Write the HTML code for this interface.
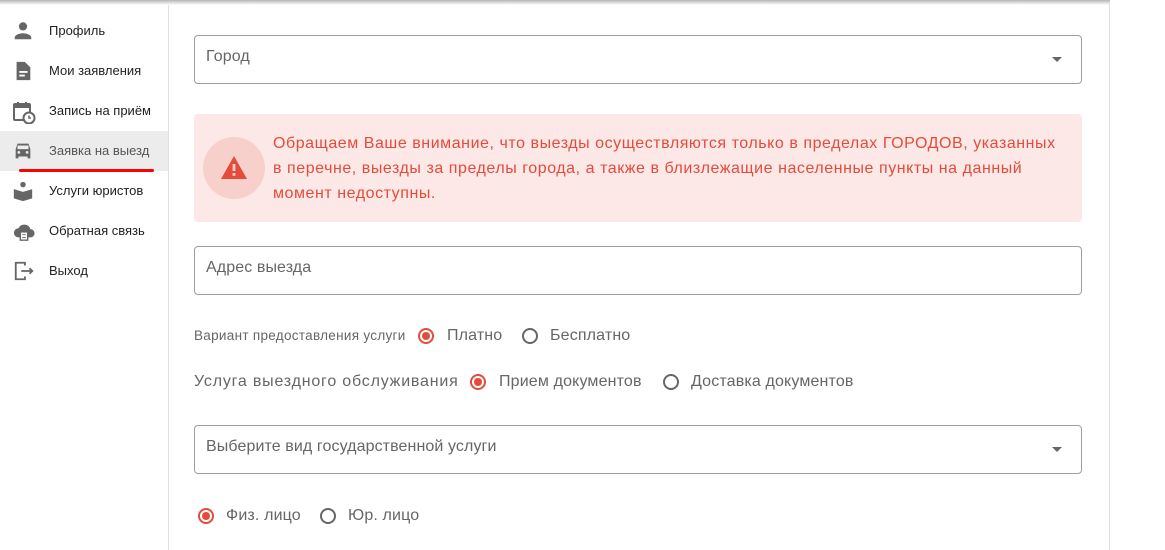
<!DOCTYPE html>
<html><head><meta charset="utf-8"><style>
*{box-sizing:border-box;margin:0;padding:0}
body{width:1165px;height:550px;overflow:hidden;background:#fff;font-family:"Liberation Sans",Roboto,sans-serif;position:relative;color:#212121}
.topsh{position:absolute;left:0;top:0;width:1110px;height:5px;background:linear-gradient(#b5b5b5,#fff)}
.side{position:absolute;left:0;top:0;width:169px;height:550px;border-right:1px solid #e0e0e0}
.vr{position:absolute;left:1109px;top:4px;width:1px;height:546px;background:#e0e0e0}
.it{position:absolute;left:0;width:168px;height:40px;font-size:13px;color:#212121}
.it span{position:absolute;left:49px;top:12px}
.it svg{position:absolute;left:12px;top:9px}
.act{background:#ececec}
.act span{color:#555}
.ul{position:absolute;left:19px;top:169px;width:135px;height:3px;background:#f00;border-radius:2px}
.fld{position:absolute;left:194px;width:888px;height:49px;border:1px solid #9e9e9e;border-radius:4px;font-size:16px;color:#666;letter-spacing:0.1px}
.fld span{position:absolute;left:11px;top:12px}
.arr{position:absolute;right:19px;top:21px;width:0;height:0;border-left:5px solid transparent;border-right:5px solid transparent;border-top:5px solid #666}
.alert{position:absolute;left:194px;top:114px;width:888px;height:108px;background:#fce8e6;border-radius:4px}
.circ{position:absolute;left:9px;top:23px;width:62px;height:62px;border-radius:50%;background:#f8d0cb}
.atext{position:absolute;left:79px;top:17px;font-size:16px;letter-spacing:0.55px;line-height:25px;color:#e44b3a;white-space:nowrap}
.t{position:absolute;color:#666;white-space:nowrap;font-size:16px;letter-spacing:0.15px}
.r{position:absolute;width:16px;height:16px;border-radius:50%;border:2px solid #666}
.r.on{border-color:#e44b3a}
.r.on:after{content:"";position:absolute;left:2px;top:2px;width:8px;height:8px;border-radius:50%;background:#e44b3a}
</style></head><body>
<div class="side">
<div class="it" style="top:11px"><svg width="22" height="22" viewBox="0 0 24 24"><circle cx="12" cy="7" r="4.5" fill="#666"/><path d="M3 21v-2c0-3 6-4.5 9-4.5s9 1.5 9 4.5v2z" fill="#666"/></svg><span>Профиль</span></div>
<div class="it" style="top:51px"><svg width="22" height="22" viewBox="0 0 24 24"><path d="M5 2h9l6 6v14H5z" fill="#666"/><path d="M8 13h9M8 17h6" stroke="#fff" stroke-width="2"/></svg><span>Мои заявления</span></div>
<div class="it" style="top:91px"><svg width="24" height="24" viewBox="0 0 24 24"><rect x="2" y="4" width="16" height="16" rx="1" fill="none" stroke="#666" stroke-width="2"/><rect x="2" y="4" width="16" height="4" fill="#666"/><path d="M6 2v4M14 2v4" stroke="#666" stroke-width="2"/><circle cx="17" cy="18" r="5.5" fill="#fff" stroke="#666" stroke-width="2"/><path d="M17 15.5V18h2" stroke="#666" stroke-width="1.5" fill="none"/></svg><span>Запись на приём</span></div>
<div class="it act" style="top:131px"><svg width="22" height="22" viewBox="0 0 24 24"><path d="M4 10l2-6h12l2 6v10h-3v-2H7v2H4z" fill="#666"/><rect x="6" y="6" width="12" height="4" fill="#ececec"/><circle cx="7.5" cy="13.5" r="1.5" fill="#ececec"/><circle cx="16.5" cy="13.5" r="1.5" fill="#ececec"/></svg><span>Заявка на выезд</span></div>
<div class="ul"></div>
<div class="it" style="top:171px"><svg width="22" height="22" viewBox="0 0 24 24"><circle cx="12" cy="5" r="3" fill="#666"/><path d="M2 10l10 3 10-3v10l-10 3-10-3z" fill="#666"/></svg><span>Услуги юристов</span></div>
<div class="it" style="top:211px"><svg width="24" height="22" viewBox="0 0 24 24"><path d="M6 19a5 5 0 010-10 7 7 0 0113 1 4.5 4.5 0 010 9z" fill="#666"/><rect x="8" y="13" width="8" height="9" fill="#fff" stroke="#666" stroke-width="1.5"/><path d="M10 16h4M10 19h4" stroke="#666"/></svg><span>Обратная связь</span></div>
<div class="it" style="top:251px"><svg width="24" height="22" viewBox="0 0 24 24"><path d="M13 6V3H3v18h10v-3" fill="none" stroke="#666" stroke-width="2"/><path d="M9 12h12M18 9l3 3-3 3" fill="none" stroke="#666" stroke-width="2"/></svg><span>Выход</span></div>
</div>
<div class="topsh"></div>
<div class="vr"></div>
<div class="fld" style="top:35px"><span>Город</span><div class="arr"></div></div>
<div class="alert"><div class="circ"><svg style="position:absolute;left:17px;top:18px" width="28" height="25" viewBox="0 0 28 25"><path d="M14 1L27 24H1z" fill="#e44b3a"/><rect x="12.6" y="9" width="2.8" height="7" fill="#f8d0cb"/><rect x="12.6" y="18" width="2.8" height="2.8" fill="#f8d0cb"/></svg></div>
<div class="atext">Обращаем Ваше внимание, что выезды осуществляются только в пределах ГОРОДОВ, указанных<br>в перечне, выезды за пределы города, а также в близлежащие населенные пункты на данный<br>момент недоступны.</div></div>
<div class="fld" style="top:246px"><span>Адрес выезда</span></div>
<div class="t" style="left:194px;top:328px;font-size:13.5px;letter-spacing:0.3px">Вариант предоставления услуги</div>
<div class="r on" style="left:418px;top:328px"></div><div class="t" style="left:447px;top:327px">Платно</div>
<div class="r" style="left:522px;top:328px"></div><div class="t" style="left:550px;top:327px">Бесплатно</div>
<div class="t" style="left:194px;top:373px;letter-spacing:0.8px">Услуга выездного обслуживания</div>
<div class="r on" style="left:470px;top:374px"></div><div class="t" style="left:499px;top:373px">Прием документов</div>
<div class="r" style="left:663px;top:374px"></div><div class="t" style="left:691px;top:373px">Доставка документов</div>
<div class="fld" style="top:425px"><span>Выберите вид государственной услуги</span><div class="arr"></div></div>
<div class="r on" style="left:198px;top:508px"></div><div class="t" style="left:226px;top:507px">Физ. лицо</div>
<div class="r" style="left:320px;top:508px"></div><div class="t" style="left:348px;top:507px">Юр. лицо</div>
</body></html>
